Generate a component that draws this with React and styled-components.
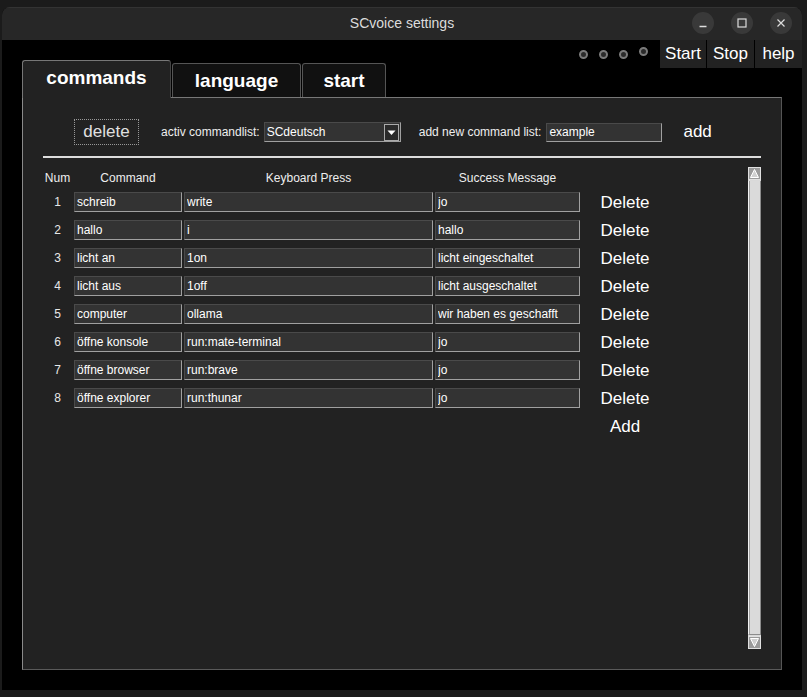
import React from "react";
import styled, { createGlobalStyle } from "styled-components";

const GlobalStyle = createGlobalStyle`
  html, body {
    margin: 0;
    padding: 0;
    background: #1b1b1b;
    font-family: "Liberation Sans", Arial, sans-serif;
  }
  * { box-sizing: border-box; }
`;

const commands = [
  ["schreib", "write", "jo"],
  ["hallo", "i", "hallo"],
  ["licht an", "1on", "licht eingeschaltet"],
  ["licht aus", "1off", "licht ausgeschaltet"],
  ["computer", "ollama", "wir haben es geschafft"],
  ["öffne konsole", "run:mate-terminal", "jo"],
  ["öffne browser", "run:brave", "jo"],
  ["öffne explorer", "run:thunar", "jo"],
];

const Window = styled.div`
  margin: 7px 0 0 2px;
  width: 800px;
  height: 683px;
  display: flex;
  flex-direction: column;
  border-radius: 8px 8px 0 0;
  overflow: hidden;
  background: #000;
`;

const TitleBar = styled.div`
  height: 33px;
  flex: none;
  background: #272727;
  border-top: 1px solid #333;
  display: flex;
  align-items: center;
  justify-content: center;
  padding-bottom: 2px;
  position: relative;
`;

const Title = styled.div`
  color: #dcdcdc;
  font-size: 14px;
`;

const WinControls = styled.div`
  position: absolute;
  right: 10px;
  top: 4px;
  display: flex;
  gap: 17px;
`;

const WinButton = styled.div`
  width: 22px;
  height: 22px;
  border-radius: 50%;
  background: #393939;
  display: flex;
  align-items: center;
  justify-content: center;
`;

const Content = styled.div`
  flex: 1;
  display: flex;
  flex-direction: column;
`;

const TopRow = styled.div`
  height: 57px;
  display: flex;
  justify-content: space-between;
  align-items: flex-start;
`;

const TabStrip = styled.div`
  margin: 20px 0 0 20px;
  display: flex;
  align-items: flex-end;
  height: 37px;
  gap: 1px;
`;

const Tab = styled.div`
  position: relative;
  z-index: 1;
  width: ${(p) => p.$w}px;
  height: ${(p) => (p.$active ? 38 : 34)}px;
  margin-bottom: ${(p) => (p.$active ? -1 : 0)}px;
  background: ${(p) => (p.$active ? "#222" : "#111")};
  border: 1px solid ${(p) => (p.$active ? "#777" : "#555")};
  border-right-color: ${(p) => (p.$active ? "#444" : "#555")};
  border-bottom: none;
  border-radius: 3px 3px 0 0;
  color: #fff;
  font-weight: bold;
  font-size: 19px;
  display: flex;
  justify-content: center;
  padding-top: 6px;
`;

const Controls = styled.div`
  display: flex;
  align-items: center;
  height: 28px;
`;

const Leds = styled.div`
  display: flex;
  gap: 11px;
  margin-right: 11px;
`;

const Led = styled.div`
  width: 9px;
  height: 9px;
  border-radius: 50%;
  border: 2px solid #7a7a7a;
  background: #2a2a2a;
  margin-top: ${(p) => (p.$up ? -3 : 0)}px;
`;

const TopButton = styled.div`
  width: ${(p) => p.$w}px;
  height: 28px;
  margin-left: 1px;
  background: #222;
  color: #fff;
  font-size: 17px;
  display: flex;
  align-items: center;
  justify-content: center;
`;

const Panel = styled.div`
  margin-left: 20px;
  width: 760px;
  height: 573px;
  background: #222;
  border: 1px solid #777;
  border-left-color: #8a8a8a;
  border-right-color: #555;
  border-bottom-color: #5a5a5a;
  display: flex;
  flex-direction: column;
`;

const Toolbar = styled.div`
  margin: 21px 0 0 51px;
  height: 26px;
  display: flex;
  align-items: center;
`;

const FocusButton = styled.div`
  width: 65px;
  height: 26px;
  border: 1px dotted #999;
  color: #e0e0e0;
  font-size: 17px;
  display: flex;
  align-items: center;
  justify-content: center;
`;

const Label = styled.span`
  color: #eee;
  font-size: 12px;
  margin-left: ${(p) => p.$ml || 0}px;
  margin-right: ${(p) => p.$mr || 0}px;
`;

const TextButton = styled.span`
  color: #fff;
  font-size: 17px;
  margin-left: ${(p) => p.$ml || 0}px;
`;

const Entry = styled.input`
  width: ${(p) => (p.$w ? `${p.$w}px` : "100%")};
  height: ${(p) => p.$h || 20}px;
  background: #333;
  border: 1px solid #a0a0a0;
  border-top-color: #4a4a4a;
  border-left-color: #4a4a4a;
  color: #fff;
  font-family: "Liberation Sans", Arial, sans-serif;
  font-size: 12px;
  padding: 0 2px;
  margin: 0;
  outline: none;
`;

const Combo = styled.div`
  width: 137px;
  height: 20px;
  background: #333;
  border: 1px solid #a0a0a0;
  border-top-color: #4a4a4a;
  border-left-color: #4a4a4a;
  display: flex;
  align-items: center;
  justify-content: space-between;
  padding-left: 2px;
  padding-right: 1px;
  color: #fff;
  font-size: 12px;
`;

const ComboArrow = styled.div`
  width: 15px;
  height: 17px;
  border: 1px solid #aaa;
  background: #2a2a2a;
  display: flex;
  align-items: flex-end;
  justify-content: center;
  padding-bottom: 4px;
`;

const Separator = styled.div`
  margin: 11px 0 0 20px;
  width: 718px;
  height: 2px;
  background: #ddd;
`;

const TableArea = styled.div`
  margin-left: 20px;
  width: 718px;
  display: flex;
`;

const Table = styled.div`
  flex: 1;
  padding-top: 13px;
`;

const Grid = styled.div`
  display: grid;
  grid-template-columns: 29px 108px 249px 145px 86px;
  column-gap: 2px;
  align-items: center;
`;

const HeaderRow = styled(Grid)`
  height: 14px;
  margin-bottom: 6px;
`;

const Head = styled.div`
  color: #eee;
  font-size: 12px;
  text-align: center;
  white-space: nowrap;
`;

const Rows = styled.div`
  display: flex;
  flex-direction: column;
  gap: 8px;
`;

const Row = styled(Grid)`
  height: 20px;
`;

const Num = styled.div`
  color: #e8e8e8;
  font-size: 12px;
  text-align: center;
`;

const RowButton = styled.div`
  grid-column: ${(p) => p.$col || "auto"};
  color: #fff;
  font-size: 17px;
  text-align: center;
  padding-top: 2px;
`;

const Scrollbar = styled.div`
  margin-top: 9px;
  width: 13px;
  height: 482px;
  display: flex;
  flex-direction: column;
  background: #d9d9d9;
`;

const ScrollArrow = styled.div`
  width: 13px;
  height: 13px;
  flex: none;
  background: #9a9a9a;
  border: 1px solid #e0e0e0;
  display: flex;
  align-items: center;
  justify-content: center;
`;

const Thumb = styled.div`
  flex: 1;
  margin: 1px 0;
  background: #dadada;
  border-left: 1px solid #f2f2f2;
  border-right: 1px solid #8c8c8c;
  border-bottom: 1px solid #8c8c8c;
  box-shadow: inset 1px 0 0 #a0a0a0;
`;

const Arrow = ({ up }) => (
  <svg width="9" height="9" viewBox="0 0 9 9">
    <polygon
      points={up ? "4.5,0.5 8.5,8.5 0.5,8.5" : "0.5,0.5 8.5,0.5 4.5,8.5"}
      fill="#cfcfcf"
      stroke="#fff"
      strokeWidth="1"
    />
  </svg>
);

export default function App() {
  return (
    <>
      <GlobalStyle />
      <Window>
        <TitleBar>
          <Title>SCvoice settings</Title>
          <WinControls>
            <WinButton>
              <svg width="10" height="10" viewBox="0 0 10 10">
                <line x1="1.5" y1="8.5" x2="8.5" y2="8.5" stroke="#ddd" strokeWidth="1.3" />
              </svg>
            </WinButton>
            <WinButton>
              <svg width="10" height="10" viewBox="0 0 10 10">
                <rect x="1" y="1" width="8" height="8" fill="none" stroke="#ddd" strokeWidth="1.2" />
              </svg>
            </WinButton>
            <WinButton>
              <svg width="10" height="10" viewBox="0 0 10 10">
                <path d="M1.5 1.5 L8.5 8.5 M8.5 1.5 L1.5 8.5" stroke="#ddd" strokeWidth="1.2" />
              </svg>
            </WinButton>
          </WinControls>
        </TitleBar>
        <Content>
          <TopRow>
            <TabStrip>
              <Tab $active $w={149}>commands</Tab>
              <Tab $w={129}>language</Tab>
              <Tab $w={84}>start</Tab>
            </TabStrip>
            <Controls>
              <Leds>
                <Led />
                <Led />
                <Led />
                <Led $up />
              </Leds>
              <TopButton $w={46}>Start</TopButton>
              <TopButton $w={47}>Stop</TopButton>
              <TopButton $w={47}>help</TopButton>
            </Controls>
          </TopRow>
          <Panel>
            <Toolbar>
              <FocusButton>delete</FocusButton>
              <Label $ml={22} $mr={4}>activ commandlist:</Label>
              <Combo>
                SCdeutsch
                <ComboArrow>
                  <svg width="9" height="6" viewBox="0 0 9 6">
                    <polygon points="0.5,0.5 8.5,0.5 4.5,5" fill="#fff" />
                  </svg>
                </ComboArrow>
              </Combo>
              <Label $ml={18} $mr={5}>add new command list:</Label>
              <Entry $w={116} $h={19} readOnly defaultValue="example" />
              <TextButton $ml={21}>add</TextButton>
            </Toolbar>
            <Separator />
            <TableArea>
              <Table>
                <HeaderRow>
                  <Head>Num</Head>
                  <Head>Command</Head>
                  <Head>Keyboard Press</Head>
                  <Head>Success Message</Head>
                </HeaderRow>
                <Rows>
                  {commands.map(([cmd, key, msg], i) => (
                    <Row key={i}>
                      <Num>{i + 1}</Num>
                      <Entry readOnly defaultValue={cmd} />
                      <Entry readOnly defaultValue={key} />
                      <Entry readOnly defaultValue={msg} />
                      <RowButton>Delete</RowButton>
                    </Row>
                  ))}
                  <Row>
                    <RowButton $col={5}>Add</RowButton>
                  </Row>
                </Rows>
              </Table>
              <Scrollbar>
                <ScrollArrow>
                  <Arrow up />
                </ScrollArrow>
                <Thumb />
                <ScrollArrow>
                  <Arrow />
                </ScrollArrow>
              </Scrollbar>
            </TableArea>
          </Panel>
        </Content>
      </Window>
    </>
  );
}
